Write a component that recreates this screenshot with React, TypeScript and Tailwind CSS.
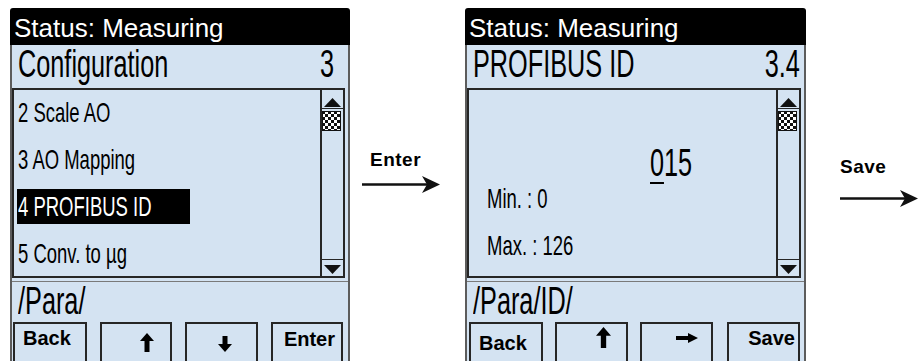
import type { ReactNode } from 'react';

const BLUE = 'bg-[#d4e3f2]';

function Narrow({ children, className = '' }: { children: ReactNode; className?: string }) {
    return <span className={`inline-block whitespace-nowrap ${className}`}>{children}</span>;
}

function TriUp() {
    return (
        <svg width="17" height="9" viewBox="0 0 17 9"><polygon points="8.5,0 17,9 0,9" fill="#111" /></svg>
    );
}

function TriDown() {
    return (
        <svg width="17" height="9" viewBox="0 0 17 9"><polygon points="0,0 17,0 8.5,9" fill="#111" /></svg>
    );
}

function Checker() {
    return (
        <svg width="19" height="20" viewBox="0 0 19 20" className="block">
            <defs>
                <pattern id="chk" width="6" height="6" patternUnits="userSpaceOnUse">
                    <rect width="6" height="6" fill="#fff" />
                    <rect width="3" height="3" fill="#111" />
                    <rect x="3" y="3" width="3" height="3" fill="#111" />
                </pattern>
            </defs>
            <rect width="19" height="20" fill="url(#chk)" />
            <rect x="0.5" y="0.5" width="18" height="19" fill="none" stroke="#111" />
        </svg>
    );
}

function ScrollBar() {
    return (
        <div className="flex w-[23px] flex-col border-l-2 border-[#262626]">
            <div className="flex h-[19px] items-end justify-center border-b border-[#262626] pb-[1px]">
                <TriUp />
            </div>
            <div className="mt-[2px]">
                <Checker />
            </div>
            <div className="flex-1" />
            <div className="flex h-[17px] items-center justify-center border-t border-[#262626] pt-[2px]">
                <TriDown />
            </div>
        </div>
    );
}

function ArrowUp({ w = 14, h = 19 }: { w?: number; h?: number }) {
    return (
        <svg width={w} height={h} viewBox="0 0 14 19" preserveAspectRatio="none">
            <polygon points="7,0 14,8 9.5,8 9.5,19 4.5,19 4.5,8 0,8" fill="#000" />
        </svg>
    );
}

function ArrowDown() {
    return (
        <svg width="14" height="16" viewBox="0 0 14 16">
            <polygon points="4.5,0 9.5,0 9.5,8 14,8 7,16 0,8 4.5,8" fill="#000" />
        </svg>
    );
}

function ArrowRight() {
    return (
        <svg width="22" height="10" viewBox="0 0 22 10">
            <polygon points="0,3 12,3 12,0 22,5 12,10 12,7 0,7" fill="#000" />
        </svg>
    );
}

function FlowArrow({ width }: { width: number }) {
    return (
        <svg width={width} height="19" viewBox={`0 0 ${width} 19`}>
            <line x1="0" y1="9.5" x2={width - 10} y2="9.5" stroke="#111" strokeWidth="2.5" />
            <polygon points={`${width - 18},1 ${width},9.5 ${width - 18},18 ${width - 13},9.5`} fill="#111" />
        </svg>
    );
}

function Panel({
    title,
    num,
    numPad,
    path,
    children,
    buttons,
}: {
    title: string;
    num: string;
    numPad: string;
    path: string;
    children: ReactNode;
    buttons: ReactNode;
}) {
    return (
        <div className="flex flex-col">
            <div className="h-[37px] rounded-t-[3px] bg-black pl-[4px] pt-[7px] text-[26px] leading-none text-white">
                Status: Measuring
            </div>
            <div className={`flex flex-1 flex-col border-x-2 border-[#5c5c5c] ${BLUE}`}>
                <div className={`flex h-[43px] items-start justify-between pl-[6px] text-[38px] leading-none text-black ${numPad}`}>
                    <Narrow className="origin-left scale-x-[0.665]">{title}</Narrow>
                    <Narrow className="origin-right scale-x-[0.665]">{num}</Narrow>
                </div>
                <div className="mr-[3px] flex h-[190px] border-2 border-[#262626]">
                    <div className="flex-1">{children}</div>
                    <ScrollBar />
                </div>
                <div className="mt-[3px] h-[40px] border-t border-[#7a7a7a] pl-[6px] text-[38px] leading-none text-black">
                    <Narrow className="origin-left scale-x-[0.665]">{path}</Narrow>
                </div>
                <div className="mt-[1px] flex h-[46px] items-start">{buttons}</div>
            </div>
        </div>
    );
}

const btn = `h-[46px] border-2 border-[#262626] ${BLUE} text-[20px] font-bold leading-none text-black`;

export default function App() {
    return (
        <div className="h-[361px] w-[920px] overflow-hidden bg-white font-['Liberation_Sans',Arial,sans-serif]">
            <div className="flex pl-[10px] pt-[8px]">
                {/* Left screen */}
                <div className="w-[340px]">
                    <Panel
                        title="Configuration"
                        num="3"
                        numPad="pr-[14px]"
                        path="/Para/"
                        buttons={
                            <div className="flex gap-[13px] pl-[1px]">
                                <div className={`${btn} w-[74px] pl-[8px] pt-[4px]`}>Back</div>
                                <div className={`${btn} flex w-[72px] justify-end pr-[16px] pt-[9px]`}>
                                    <ArrowUp />
                                </div>
                                <div className={`${btn} flex w-[73px] justify-end pr-[24px] pt-[12px]`}>
                                    <ArrowDown />
                                </div>
                                <div className={`${btn} flex w-[72px] justify-end pr-[6px] pt-[5px]`}>Enter</div>
                            </div>
                        }
                    >
                        <div className="flex flex-col gap-[12px] pl-[3px] pt-[5px] text-[28px] leading-none text-black">
                            {['2 Scale AO', '3 AO Mapping', '4 PROFIBUS ID', '5 Conv. to µg'].map((item, i) => (
                                <div
                                    key={item}
                                    className={`flex h-[35px] w-[173px] items-center pl-[1px] ${i === 2 ? 'bg-black text-white' : ''}`}
                                >
                                    <Narrow className="origin-left scale-x-[0.66]">{item}</Narrow>
                                </div>
                            ))}
                        </div>
                    </Panel>
                </div>

                {/* Enter arrow */}
                <div className="flex w-[115px] flex-col pl-[12px] pt-[142px]">
                    <div className="pl-[8px] text-[19px] font-bold leading-none tracking-[0.5px] text-black">Enter</div>
                    <div className="mt-[6px]">
                        <FlowArrow width={78} />
                    </div>
                </div>

                {/* Right screen */}
                <div className="w-[341px]">
                    <Panel
                        title="PROFIBUS ID"
                        num="3.4"
                        numPad="pr-[4px]"
                        path="/Para/ID/"
                        buttons={
                            <div className="flex pl-[2px]">
                                <div className={`${btn} w-[74px] pl-[8px] pt-[9px]`}>Back</div>
                                <div className={`${btn} ml-[12px] flex w-[73px] justify-end pr-[15px] pt-[3px]`}>
                                    <ArrowUp w={15} h={21} />
                                </div>
                                <div className={`${btn} ml-[12px] flex w-[73px] justify-end pr-[13px] pt-[9px]`}>
                                    <ArrowRight />
                                </div>
                                <div className={`${btn} ml-[14px] flex w-[73px] justify-end pr-[3px] pt-[4px]`}>Save</div>
                            </div>
                        }
                    >
                        <div className="flex flex-col pt-[54px] text-black">
                            <div className="pl-[181px] text-[38px] leading-none">
                                <Narrow className="origin-left scale-x-[0.665]">
                                    <span className="inline-block border-b-2 border-black leading-none">0</span>15
                                </Narrow>
                            </div>
                            <div className="mt-[1px] pl-[18px] text-[28px] leading-none">
                                <Narrow className="origin-left scale-x-[0.66]">Min. : 0</Narrow>
                            </div>
                            <div className="mt-[19px] pl-[18px] text-[28px] leading-none">
                                <Narrow className="origin-left scale-x-[0.66]">Max. : 126</Narrow>
                            </div>
                        </div>
                    </Panel>
                </div>

                {/* Save arrow */}
                <div className="flex flex-1 flex-col pl-[34px] pt-[149px]">
                    <div className="text-[19px] font-bold leading-none tracking-[0.5px] text-black">Save</div>
                    <div className="mt-[13px]">
                        <FlowArrow width={78} />
                    </div>
                </div>
            </div>
        </div>
    );
}
